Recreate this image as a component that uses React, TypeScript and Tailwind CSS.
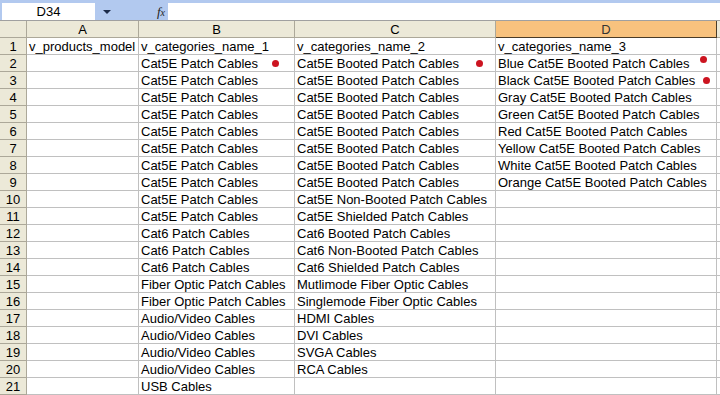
const cols = [
  { key: "A", width: "w-[112px]" },
  { key: "B", width: "w-[156px]" },
  { key: "C", width: "w-[201px]" },
  { key: "D", width: "w-[221px]" },
];

const rows: string[][] = [
  ["v_products_model", "v_categories_name_1", "v_categories_name_2", "v_categories_name_3"],
  ["", "Cat5E Patch Cables", "Cat5E Booted Patch Cables", "Blue Cat5E Booted Patch Cables"],
  ["", "Cat5E Patch Cables", "Cat5E Booted Patch Cables", "Black Cat5E Booted Patch Cables"],
  ["", "Cat5E Patch Cables", "Cat5E Booted Patch Cables", "Gray Cat5E Booted Patch Cables"],
  ["", "Cat5E Patch Cables", "Cat5E Booted Patch Cables", "Green Cat5E Booted Patch Cables"],
  ["", "Cat5E Patch Cables", "Cat5E Booted Patch Cables", "Red Cat5E Booted Patch Cables"],
  ["", "Cat5E Patch Cables", "Cat5E Booted Patch Cables", "Yellow Cat5E Booted Patch Cables"],
  ["", "Cat5E Patch Cables", "Cat5E Booted Patch Cables", "White Cat5E Booted Patch Cables"],
  ["", "Cat5E Patch Cables", "Cat5E Booted Patch Cables", "Orange Cat5E Booted Patch Cables"],
  ["", "Cat5E Patch Cables", "Cat5E Non-Booted Patch Cables", ""],
  ["", "Cat5E Patch Cables", "Cat5E Shielded Patch Cables", ""],
  ["", "Cat6 Patch Cables", "Cat6 Booted Patch Cables", ""],
  ["", "Cat6 Patch Cables", "Cat6 Non-Booted Patch Cables", ""],
  ["", "Cat6 Patch Cables", "Cat6 Shielded Patch Cables", ""],
  ["", "Fiber Optic Patch Cables", "Mutlimode Fiber Optic Cables", ""],
  ["", "Fiber Optic Patch Cables", "Singlemode Fiber Optic Cables", ""],
  ["", "Audio/Video Cables", "HDMI Cables", ""],
  ["", "Audio/Video Cables", "DVI Cables", ""],
  ["", "Audio/Video Cables", "SVGA Cables", ""],
  ["", "Audio/Video Cables", "RCA Cables", ""],
  ["", "USB Cables", "", ""],
];

// red comment-ish markers: [row, col, left px inside cell, top px inside cell]
const dots: [number, number, number, number][] = [
  [2, 1, 133, 5],
  [2, 2, 181, 5],
  [2, 3, 204, 1],
  [3, 3, 207, 5],
];

const Dot = ({ left, top }: { left: number; top: number }) => (
  <span
    className="absolute w-[7px] h-[7px] rounded-full bg-[#cc1420]"
    style={{ left, top }}
  />
);

const FormulaBar = () => (
  <div className="h-[21px] bg-[#b2c9ef] pt-[3px] flex border-b border-[#a0a0a0]">
    <div className="ml-[2px] w-[93px] h-[17px] bg-white text-center leading-[17px]">D34</div>
    <div className="w-[23px] h-[17px] flex items-center justify-center">
      <span className="w-0 h-0 border-l-[4px] border-r-[4px] border-t-[4px] border-l-transparent border-r-transparent border-t-[#1c2b4a]" />
    </div>
    <div className="w-[50px] h-[17px] flex items-center justify-end pr-[3px]">
      <span className="italic font-['Liberation_Serif',serif] text-[13px] text-[#222]">
        f<span className="text-[10px]">x</span>
      </span>
    </div>
    <div className="flex-1 h-[17px] bg-white" />
  </div>
);

export default function App() {
  return (
    <div className="w-[720px] h-[395px] overflow-hidden bg-white font-['Liberation_Sans',Arial,sans-serif] text-[13px] text-black">
      <FormulaBar />

      {/* column headers */}
      <div className="flex h-[17px]">
        <div className="w-[27px] bg-[#ece9d8] border-r border-b border-[#aca899]" />
        {cols.map((c) => (
          <div
            key={c.key}
            className={`${c.width} text-center leading-[17px] border-r border-b ${
              c.key === "D"
                ? "bg-[#f8c27e] border-[#4a3c28] text-[#333]"
                : "bg-[#ece9d8] border-[#aca899]"
            }`}
          >
            {c.key}
          </div>
        ))}
        <div className="flex-1 bg-[#ece9d8] border-b border-[#aca899]" />
      </div>

      {rows.map((row, ri) => (
        <div key={ri} className="flex h-[17px]">
          <div className="w-[27px] bg-[#ece9d8] border-r border-b border-[#aca899] text-center leading-[17px]">
            {ri + 1}
          </div>
          {row.map((text, ci) => (
            <div
              key={ci}
              className={`${cols[ci].width} relative border-r border-b border-[#c0c0c0] pl-[2px] leading-[17px] whitespace-nowrap`}
            >
              {text}
              {dots
                .filter((d) => d[0] === ri + 1 && d[1] === ci)
                .map((d, i) => (
                  <Dot key={i} left={d[2]} top={d[3]} />
                ))}
            </div>
          ))}
          <div className="flex-1 border-b border-[#c0c0c0]" />
        </div>
      ))}
    </div>
  );
}
